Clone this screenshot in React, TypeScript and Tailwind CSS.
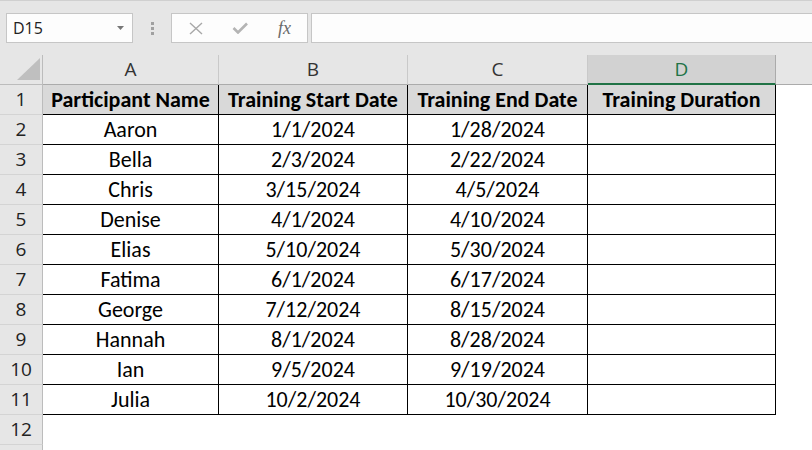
import React from "react";

type Row = { name: string; start: string; end: string };

const rows: Row[] = [
  { name: "Aaron", start: "1/1/2024", end: "1/28/2024" },
  { name: "Bella", start: "2/3/2024", end: "2/22/2024" },
  { name: "Chris", start: "3/15/2024", end: "4/5/2024" },
  { name: "Denise", start: "4/1/2024", end: "4/10/2024" },
  { name: "Elias", start: "5/10/2024", end: "5/30/2024" },
  { name: "Fatima", start: "6/1/2024", end: "6/17/2024" },
  { name: "George", start: "7/12/2024", end: "8/15/2024" },
  { name: "Hannah", start: "8/1/2024", end: "8/28/2024" },
  { name: "Ian", start: "9/5/2024", end: "9/19/2024" },
  { name: "Julia", start: "10/2/2024", end: "10/30/2024" },
];

const cellFont = { fontFamily: "Carlito, Calibri, Lato, sans-serif" };
const uiFont = { fontFamily: "'Open Sans', 'Noto Sans', sans-serif" };

const colWidths = ["w-[176px]", "w-[189px]", "w-[180px]", "w-[188px]"];

function RowHead({ n }: { n?: number }) {
  return (
    <div
      className="w-[43px] shrink-0 h-full flex items-center justify-center bg-[#e6e6e6] border-r border-b border-r-[#bcbcbc] border-b-[#d4d4d4] text-[19px] text-[#222]"
      style={uiFont}
    >
      {n}
    </div>
  );
}

function FormulaBar() {
  return (
    <div className="h-[55px] bg-[#e6e6e6] border-t border-[#d0d0d0]">
      <div className="flex items-start pt-[12px]">
        <div className="ml-[6px] w-[127px] h-[30px] bg-[#fdfdfd] border border-[#c6c6c6] flex items-center justify-between pl-[6px] pr-[8px]">
          <span className="text-[16px] text-[#222]" style={uiFont}>
            D15
          </span>
          <svg width="7" height="4" viewBox="0 0 7 4">
            <path d="M0 0 L7 0 L3.5 4 Z" fill="#777" />
          </svg>
        </div>
        <div className="w-[38px] h-[30px] flex flex-col items-center justify-center gap-[2px]">
          <div className="w-[3px] h-[3px] bg-[#a0a0a0]" />
          <div className="w-[3px] h-[3px] bg-[#a0a0a0]" />
          <div className="w-[3px] h-[3px] bg-[#a0a0a0]" />
        </div>
        <div className="w-[137px] h-[30px] bg-[#fdfdfd] border border-[#c6c6c6] flex items-center">
          <div className="w-[45px] flex justify-center pl-[2px]">
            <svg width="14" height="13" viewBox="0 0 14 13">
              <path d="M1 1 L13 12 M13 1 L1 12" stroke="#a8a8a8" strokeWidth="1.4" fill="none" />
            </svg>
          </div>
          <div className="w-[45px] flex justify-center">
            <svg width="16" height="12" viewBox="0 0 16 12">
              <path d="M1.5 6 L6 10.5 L15 1.5" stroke="#b4b4b4" strokeWidth="2.6" fill="none" />
            </svg>
          </div>
          <div className="w-[45px] flex justify-center">
            <span
              className="italic text-[18px] text-[#6a6a6a] leading-none"
              style={{ fontFamily: "'Liberation Serif', serif" }}
            >
              fx
            </span>
          </div>
        </div>
        <div className="ml-[3px] flex-1 h-[30px] bg-[#fdfdfd] border border-r-0 border-[#c6c6c6]" />
      </div>
    </div>
  );
}

function ColumnHeaders() {
  const letters = ["A", "B", "C"];
  return (
    <div className="flex h-[30px]">
      <div className="w-[43px] shrink-0 bg-[#e6e6e6] border-r border-b border-[#bcbcbc] flex items-end justify-end pr-[2px] pb-[4px]">
        <svg width="23" height="22" viewBox="0 0 23 22">
          <path d="M23 0 L23 22 L0 22 Z" fill="#bfbfbf" />
        </svg>
      </div>
      {letters.map((l, i) => (
        <div
          key={l}
          className={`${colWidths[i]} shrink-0 bg-[#e6e6e6] border-r border-b border-r-[#c9c9c9] border-b-[#ababab] flex items-center justify-center text-[19px] text-[#333]`}
          style={uiFont}
        >
          {l}
        </div>
      ))}
      <div
        className="w-[188px] shrink-0 bg-[#d2d2d2] border-r border-r-[#ababab] border-b-2 border-b-[#217346] flex items-center justify-center text-[19px] text-[#217346]"
        style={uiFont}
      >
        D
      </div>
      <div className="flex-1 bg-[#e6e6e6] border-b border-[#ababab]" />
    </div>
  );
}

function DataCell({ w, children, bold, head }: { w: string; children?: React.ReactNode; bold?: boolean; head?: boolean }) {
  return (
    <div
      className={`${w} shrink-0 h-full border-r border-b border-black flex items-center justify-center text-[22px] leading-none text-black whitespace-nowrap ${
        bold ? "font-bold" : ""
      } ${head ? "bg-[#d9d9d9]" : "bg-white"}`}
      style={cellFont}
    >
      {children}
    </div>
  );
}

export default function App() {
  return (
    <div className="w-[812px] h-[450px] overflow-hidden bg-white">
      <FormulaBar />
      <ColumnHeaders />
      <div className="flex h-[30px]">
        <RowHead n={1} />
        <DataCell w={colWidths[0]} bold head>
          Participant Name
        </DataCell>
        <DataCell w={colWidths[1]} bold head>
          Training Start Date
        </DataCell>
        <DataCell w={colWidths[2]} bold head>
          Training End Date
        </DataCell>
        <DataCell w={colWidths[3]} bold head>
          Training Duration
        </DataCell>
      </div>
      {rows.map((r, i) => (
        <div key={r.name} className="flex h-[30px]">
          <RowHead n={i + 2} />
          <DataCell w={colWidths[0]}>{r.name}</DataCell>
          <DataCell w={colWidths[1]}>{r.start}</DataCell>
          <DataCell w={colWidths[2]}>{r.end}</DataCell>
          <DataCell w={colWidths[3]} />
        </div>
      ))}
      <div className="flex h-[30px]">
        <RowHead n={12} />
      </div>
      <div className="flex h-[30px]">
        <RowHead />
      </div>
    </div>
  );
}
